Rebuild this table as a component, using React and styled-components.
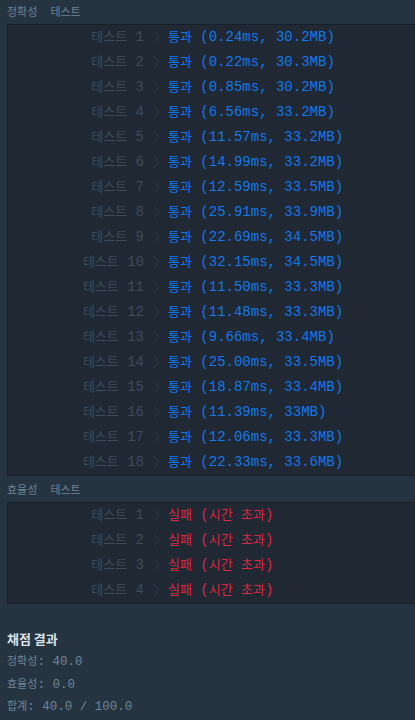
import React from 'react';
import styled, { createGlobalStyle } from 'styled-components';

const accuracy = [
  ['0.24ms', '30.2MB'],
  ['0.22ms', '30.3MB'],
  ['0.85ms', '30.2MB'],
  ['6.56ms', '33.2MB'],
  ['11.57ms', '33.2MB'],
  ['14.99ms', '33.2MB'],
  ['12.59ms', '33.5MB'],
  ['25.91ms', '33.9MB'],
  ['22.69ms', '34.5MB'],
  ['32.15ms', '34.5MB'],
  ['11.50ms', '33.3MB'],
  ['11.48ms', '33.3MB'],
  ['9.66ms', '33.4MB'],
  ['25.00ms', '33.5MB'],
  ['18.87ms', '33.4MB'],
  ['11.39ms', '33MB'],
  ['12.06ms', '33.3MB'],
  ['22.33ms', '33.6MB'],
];

const efficiency = [1, 2, 3, 4];

const GlobalStyle = createGlobalStyle`
  html, body {
    margin: 0;
    padding: 0;
    overflow: hidden;
    background: #263341;
  }
`;

const Page = styled.div`
  padding-left: 7px;
  font-family: 'Liberation Mono', 'Noto Sans CJK KR', monospace;
  display: flex;
  flex-direction: column;
  gap: 2px;
`;

const Section = styled.section`
  display: flex;
  flex-direction: column;
`;

const SectionTitle = styled.div`
  height: 24px;
  display: flex;
  align-items: center;
  gap: 13px;
  padding-bottom: 3px;
  box-sizing: border-box;
  font-family: 'Noto Sans CJK KR', sans-serif;
  font-size: 11px;
  color: #6d8393;
`;

const Panel = styled.div`
  margin-right: -12px;
  background: #1f2833;
  border: 1px solid #172029;
`;

const Row = styled.div`
  display: flex;
  align-items: center;
  height: 25px;
  padding-bottom: 1px;
  box-sizing: border-box;
  font-size: 14px;
`;

const Label = styled.div`
  width: 136px;
  text-align: right;
  color: #3d4b5a;
  white-space: pre;
`;

const Chevron = styled.div`
  width: 24px;
  display: flex;
  justify-content: center;
  align-items: center;
`;

const Result = styled.div`
  white-space: pre;
  color: ${({ $fail }) => ($fail ? '#dc2944' : '#1479ea')};
`;

const Ko = styled.span`
  font-family: 'Noto Sans CJK KR', sans-serif;
  font-size: ${({ $size }) => $size || 13}px;
  line-height: 1;
`;

const Summary = styled.div`
  padding-top: 21px;
  font-size: 12.5px;
  color: #6e8797;
`;

const SummaryTitle = styled.div`
  height: 24px;
  line-height: 24px;
  font-family: 'Noto Sans CJK KR', sans-serif;
  font-size: 13px;
  font-weight: 700;
  color: #dde3e9;
`;

const SummaryLine = styled.div`
  height: 22.5px;
  line-height: 22.5px;
  white-space: pre;
`;

const ChevronIcon = () => (
  <svg width="7" height="14" viewBox="0 0 7 14">
    <polyline points="1,1 6,7 1,13" fill="none" stroke="#2c3846" strokeWidth="1" />
  </svg>
);

const TestRow = ({ n, children, fail }) => (
  <Row>
    <Label>
      <Ko>테스트</Ko> {n}
    </Label>
    <Chevron>
      <ChevronIcon />
    </Chevron>
    <Result $fail={fail}>{children}</Result>
  </Row>
);

const App = () => (
  <>
    <GlobalStyle />
    <Page>
      <Section>
        <SectionTitle>
          <span>정확성</span>
          <span>테스트</span>
        </SectionTitle>
        <Panel>
          {accuracy.map(([time, mem], i) => (
            <TestRow key={i} n={i + 1}>
              <Ko>통과</Ko> ({time}, {mem})
            </TestRow>
          ))}
        </Panel>
      </Section>
      <Section>
        <SectionTitle>
          <span>효율성</span>
          <span>테스트</span>
        </SectionTitle>
        <Panel>
          {efficiency.map((n) => (
            <TestRow key={n} n={n} fail>
              <Ko>실패</Ko> (<Ko>시간</Ko> <Ko>초과</Ko>)
            </TestRow>
          ))}
        </Panel>
      </Section>
      <Summary>
        <SummaryTitle>채점 결과</SummaryTitle>
        <SummaryLine>
          <Ko $size={11}>정확성</Ko>: 40.0
        </SummaryLine>
        <SummaryLine>
          <Ko $size={11}>효율성</Ko>: 0.0
        </SummaryLine>
        <SummaryLine>
          <Ko $size={11}>합계</Ko>: 40.0 / 100.0
        </SummaryLine>
      </Summary>
    </Page>
  </>
);

export default App;
